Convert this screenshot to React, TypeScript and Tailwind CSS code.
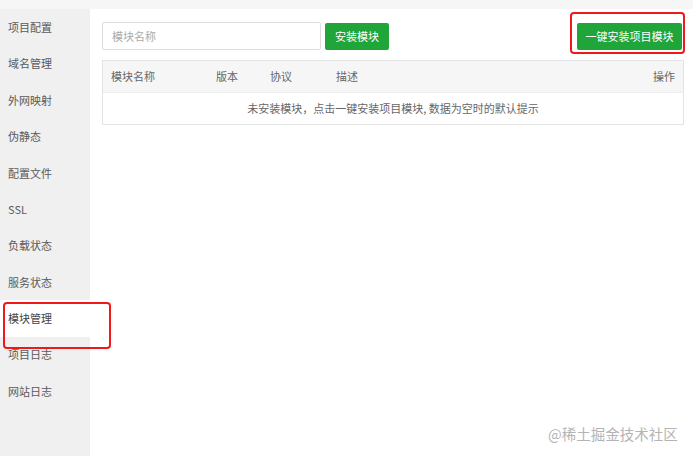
import React from 'react';

const menu = ['项目配置', '域名管理', '外网映射', '伪静态', '配置文件', 'SSL', '负载状态', '服务状态', '模块管理', '项目日志', '网站日志'];

export default function App() {
  const active = '模块管理';
  return (
    <div
      className="relative w-[693px] h-[456px] bg-[#f6f6f6] pt-[9px] overflow-hidden text-[11px] text-[#5a5a5a]"
      style={{ fontFamily: '"Microsoft YaHei", "Noto Sans CJK SC", "Noto Sans", sans-serif' }}
    >
      <div className="flex h-full">
        {/* Side menu */}
        <div className="w-[90px] shrink-0 bg-[#f0f0f0] h-full">
          {menu.map((m) => (
            <div
              key={m}
              className={`h-[36.4px] flex items-center pl-[8px] ${m === active ? 'bg-white text-[#444]' : ''}`}
            >
              {m}
            </div>
          ))}
        </div>

        {/* Content */}
        <div className="flex-1 bg-white pl-[12px] pr-[9px] pt-[13px]">
          <div className="flex items-center justify-between">
            <div className="flex items-center gap-[4px]">
              <input
                placeholder="模块名称"
                className="w-[219px] h-[28px] border border-[#ddd] rounded-[2px] px-[9px] text-[11px] placeholder:text-[#aaa] outline-none"
              />
              <button className="h-[27px] w-[64px] bg-[#20a53a] text-white rounded-[2px] text-[11px]">安装模块</button>
            </div>
            <button className="h-[27px] w-[105px] bg-[#20a53a] text-white rounded-[2px] text-[11px] mr-[2px]">一键安装项目模块</button>
          </div>

          <div className="mt-[10px] border border-[#e4e4e4]">
            <div className="flex items-center h-[32px] bg-[#f6f6f6] border-b border-[#eee] text-[#666] px-[8px]">
              <span className="w-[105px]">模块名称</span>
              <span className="w-[54px]">版本</span>
              <span className="w-[66px]">协议</span>
              <span className="flex-1">描述</span>
              <span>操作</span>
            </div>
            <div className="h-[31px] flex items-center justify-center text-[#666]">
              未安装模块，点击一键安装项目模块, 数据为空时的默认提示
            </div>
          </div>
        </div>
      </div>

      {/* Highlight boxes */}
      <div className="absolute left-[3px] top-[302px] w-[108px] h-[47px] border-2 border-[#f01818] rounded-[4px]" />
      <div className="absolute left-[570px] top-[12px] w-[115px] h-[42px] border-2 border-[#f01818] rounded-[4px]" />

      {/* Watermark */}
      <div className="absolute left-[548px] top-[423px] text-[14.5px] text-[#b4b4b4]">@稀土掘金技术社区</div>
    </div>
  );
}
